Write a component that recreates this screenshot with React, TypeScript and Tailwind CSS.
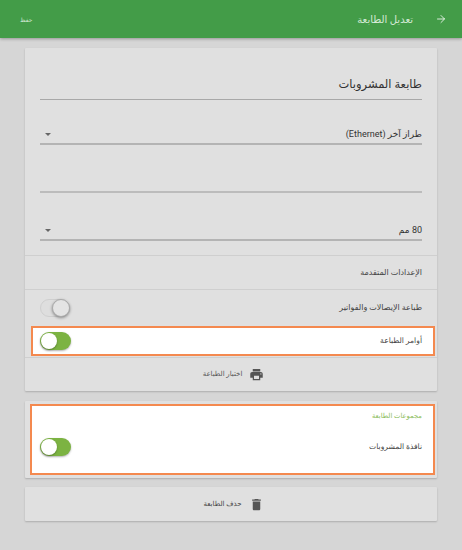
import { ArrowRight } from "lucide-react";

const font = "font-['Roboto','DejaVu_Sans',sans-serif]";

function Toggle({ on }: { on: boolean }) {
  if (on) {
    return (
      <div className="flex h-[18px] w-[31px] flex-row-reverse items-center rounded-full bg-[#7cb342] shadow-[0_1px_2px_rgba(0,0,0,0.3)]">
        <div className="mr-auto ml-[1px] h-[16px] w-[16px] rounded-full bg-white shadow-[0_1px_2px_rgba(0,0,0,0.3)]" />
      </div>
    );
  }
  return (
    <div className="flex h-[18px] w-[30px] items-center justify-start rounded-full border border-[#cfcfcf] bg-[#dedede]">
      <div className="mr-[-1px] h-[18px] w-[18px] rounded-full border border-[#aaa] bg-[#e4e4e4] shadow-[0_1px_3px_rgba(0,0,0,0.4)]" />
    </div>
  );
}

function Select({ label }: { label: string }) {
  return (
    <div className="mx-[15px] flex h-5 items-center justify-between border-b-2 border-[#b4b4b4] pt-[1px] text-[9px] text-[#333]">
      <span>{label}</span>
      <span className="ml-[5px] h-0 w-0 border-x-[3px] border-t-[3px] border-x-transparent border-t-[#666]" />
    </div>
  );
}

export default function App() {
  return (
    <div dir="rtl" className={`${font} h-[550px] w-[462px] overflow-hidden bg-[#d6d6d6]`}>
      <header className="flex h-[38px] items-center bg-[#439c48] text-white shadow-[0_1px_3px_rgba(0,0,0,0.3)]">
        <ArrowRight className="mr-[15px] h-[12px] w-[12px]" strokeWidth={1.6} />
        <span className="mr-[22px] text-[10px] text-[#d5ead6]">تعديل الطابعة</span>
        <span className="mr-auto ml-[20px] text-[6px] text-[#d5ead6]">حفظ</span>
      </header>

      <section className="mx-[25px] mt-[10px] h-[343px] rounded-[1px] bg-[#e0e0e0] shadow-[0_1px_2px_rgba(0,0,0,0.2)]">
        <div className="mx-[15px] h-[52px] border-b border-[#a8a8a8] pt-[27px] text-[11.5px] leading-[18px] text-[#333]">
          طابعة المشروبات
        </div>
        <div className="mt-[25px]">
          <Select label="طراز آخر (Ethernet)" />
        </div>
        <div className="mx-[15px] mt-[46px] border-b-2 border-[#bcbcbc]" />
        <div className="mt-[28px]">
          <Select label="80 مم" />
        </div>

        <div className="mt-[14px] flex h-[35px] items-center border-y border-[#cfcfcf] px-[15px] text-[8px] text-[#444]">
          الإعدادات المتقدمة
        </div>
        <div className="flex h-[36px] items-center justify-between px-[15px] text-[8px] text-[#444]">
          <span>طباعة الإيصالات والفواتير</span>
          <Toggle on={false} />
        </div>
        <div className="ml-[6px] mr-[2px] flex h-[30px] items-center justify-between border-2 border-[#f4894f] bg-white pl-[7px] pr-[11px] text-[7.6px] text-[#444]">
          <span>أوامر الطباعة</span>
          <Toggle on />
        </div>
        <div className="mt-[1px] flex h-[34px] items-center justify-center gap-[7px] border-t border-[#cfcfcf] pl-[5px] text-[7px] text-[#555]">
          <svg viewBox="0 0 24 24" className="h-[15px] w-[15px] fill-[#555]">
            <path d="M19 8H5c-1.66 0-3 1.34-3 3v6h4v4h12v-4h4v-6c0-1.66-1.34-3-3-3zm-3 11H8v-5h8v5zm3-7c-.55 0-1-.45-1-1s.45-1 1-1 1 .45 1 1-.45 1-1 1zm-1-9H6v4h12V3z" />
          </svg>
          <span>اختبار الطباعة</span>
        </div>
      </section>

      <section className="mx-[25px] mt-[10px] h-[77px] rounded-[1px] bg-[#e0e0e0] pt-[3px] shadow-[0_1px_2px_rgba(0,0,0,0.2)]">
        <div className="ml-[5px] mr-[2px] h-[71px] border-2 border-[#f4894f] bg-white pl-[8px] pr-[11px] pt-[4px]">
          <div className="text-[6.8px] leading-[12px] text-[#8bbd5c]">مجموعات الطابعة</div>
          <div className="mt-[16px] flex items-center justify-between text-[7.6px] text-[#444]">
            <span>نافذة المشروبات</span>
            <Toggle on />
          </div>
        </div>
      </section>

      <section className="mx-[25px] mt-[9px] flex h-[34px] items-center justify-center gap-[7px] rounded-[1px] bg-[#e0e0e0] pl-[5px] text-[7px] text-[#444] shadow-[0_1px_2px_rgba(0,0,0,0.2)]">
        <svg viewBox="0 0 24 24" className="h-[15px] w-[15px] fill-[#555]">
          <path d="M6 19c0 1.1.9 2 2 2h8c1.1 0 2-.9 2-2V7H6v12zM19 4h-3.5l-1-1h-5l-1 1H5v2h14V4z" />
        </svg>
        <span>حذف الطابعة</span>
      </section>
    </div>
  );
}
